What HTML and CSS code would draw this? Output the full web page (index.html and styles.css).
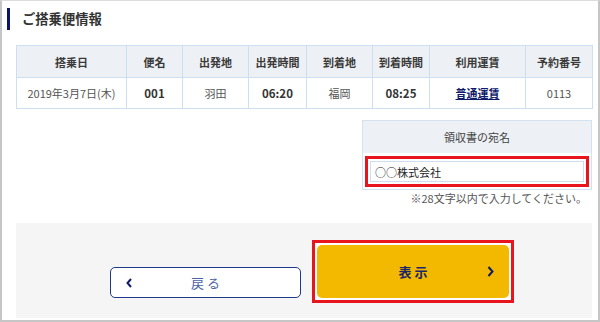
FILE: index.html
```html
<!DOCTYPE html>
<html lang="ja">

<head>
    <meta charset="UTF-8">
    <meta name="viewport" content="width=device-width, initial-scale=1.0">
    <title>ご搭乗便情報</title>
    <link rel="stylesheet" href="styles.css">
</head>

<body>
    <div class="page">
        <h2 class="heading">ご搭乗便情報</h2>

        <div class="content">
            <table class="flight-table">
                <colgroup>
                    <col style="width: 110px">
                    <col style="width: 56px">
                    <col style="width: 66px">
                    <col style="width: 58px">
                    <col style="width: 66px">
                    <col style="width: 57px">
                    <col style="width: 96px">
                    <col style="width: 67px">
                </colgroup>
                <thead>
                    <tr>
                        <th>搭乗日</th>
                        <th>便名</th>
                        <th>出発地</th>
                        <th>出発時間</th>
                        <th>到着地</th>
                        <th>到着時間</th>
                        <th>利用運賃</th>
                        <th>予約番号</th>
                    </tr>
                </thead>
                <tbody>
                    <tr>
                        <td>2019年3月7日(木)</td>
                        <td class="strong">001</td>
                        <td>羽田</td>
                        <td class="strong">06:20</td>
                        <td>福岡</td>
                        <td class="strong">08:25</td>
                        <td><a href="#" class="fare-link">普通運賃</a></td>
                        <td>0113</td>
                    </tr>
                </tbody>
            </table>

            <div class="receipt">
                <div class="receipt-head">領収書の宛名</div>
                <div class="receipt-body">
                    <div class="highlight">
                        <input type="text" class="receipt-input" value="○○株式会社">
                    </div>
                </div>
            </div>
            <p class="note">※28文字以内で入力してください。</p>

            <div class="actions">
                <button type="button" class="btn btn-back">
                    <svg class="chevron" width="6" height="10" viewBox="0 0 6 10">
                        <polyline points="5,1 1.5,5 5,9" fill="none" stroke="currentColor" stroke-width="2"/>
                    </svg>
                    <span class="btn-label">戻 る</span>
                </button>
                <div class="highlight highlight-btn">
                    <button type="button" class="btn btn-show">
                        <span></span>
                        <span class="btn-label">表 示</span>
                        <svg class="chevron" width="7" height="11" viewBox="0 0 7 11">
                            <polyline points="1.5,1 5.5,5.5 1.5,10" fill="none" stroke="currentColor" stroke-width="2"/>
                        </svg>
                    </button>
                </div>
            </div>
        </div>
    </div>
</body>

</html>
```

FILE: styles.css
```css
body {
    margin: 0;
    font-family: "Noto Sans CJK JP", "Noto Sans", sans-serif;
    color: #333;
    background-color: #fff;
}

.page {
    width: 600px;
    height: 322px;
    box-sizing: border-box;
    border: 2px solid #c6c6c6;
    border-top: 1px solid #dcdcdc;
    overflow: hidden;
}

.heading {
    margin: 7px 0 0 5px;
    height: 22px;
    line-height: 22px;
    padding-left: 12px;
    border-left: 3px solid #0d1466;
    font-size: 13.3px;
    font-weight: bold;
    color: #333;
}

.content {
    padding: 0 6px 0 14px;
}

.flight-table {
    margin-top: 15px;
    width: 576px;
    table-layout: fixed;
    border-collapse: collapse;
    font-size: 11px;
}

.flight-table th,
.flight-table td {
    border: 1px solid #cddff0;
    text-align: center;
    padding: 0;
    white-space: nowrap;
}

.flight-table th {
    height: 31px;
    background-color: #edf0f4;
    font-weight: bold;
    color: #3a3a3a;
}

.flight-table td {
    height: 30px;
    color: #555;
}

.flight-table td.strong {
    font-weight: bold;
    font-size: 11.5px;
    color: #333;
}

.fare-link {
    color: #0f1a6b;
    font-weight: bold;
    text-decoration: underline;
}

.receipt {
    margin: 11px 0 0 auto;
    width: 230px;
    box-sizing: border-box;
    border: 1px solid #d4e1ee;
}

.receipt-head {
    height: 32px;
    line-height: 32px;
    text-align: center;
    font-size: 11px;
    background-color: #edf0f4;
    color: #444;
}

.receipt-body {
    padding: 3px 2px 2px 2px;
    background-color: #fff;
}

.highlight {
    border: 3px solid #e8141e;
    padding: 2px;
    background-color: #fff;
}

.receipt-input {
    display: block;
    width: 100%;
    height: 21px;
    box-sizing: border-box;
    border: 1px solid #cddff0;
    padding: 0 4px;
    font-family: "Noto Sans CJK JP", sans-serif;
    font-size: 11px;
    color: #222;
    outline: none;
}

.note {
    margin: 0;
    padding-right: 5px;
    line-height: 17px;
    text-align: right;
    font-size: 11px;
    color: #555;
}

.actions {
    margin-top: 16px;
    height: 95px;
    box-sizing: border-box;
    padding: 17px 0 15px 94px;
    background-color: #f5f5f5;
    display: flex;
    align-items: flex-end;
    gap: 11px;
}

.btn {
    display: grid;
    grid-template-columns: 1fr auto 1fr;
    align-items: center;
    box-sizing: border-box;
    border-radius: 5px;
    font-family: "Noto Sans CJK JP", sans-serif;
    cursor: pointer;
    padding: 0 15px;
}

.btn-back {
    width: 191px;
    height: 31px;
    margin-bottom: 5px;
    background-color: #fff;
    border: 1.5px solid #1d3a8a;
    color: #0f1a6b;
}

.btn-back .btn-label {
    color: #4a62a6;
    font-size: 13px;
}

.btn-back .chevron {
    justify-self: start;
}

.highlight-btn {
    padding: 2px;
}

.btn-show {
    width: 192px;
    height: 53px;
    background-color: #f3b900;
    border: none;
    color: #0f1a6b;
}

.btn-show .btn-label {
    font-size: 13px;
    font-weight: bold;
    color: #1a2468;
}

.btn-show .chevron {
    justify-self: end;
}
```
